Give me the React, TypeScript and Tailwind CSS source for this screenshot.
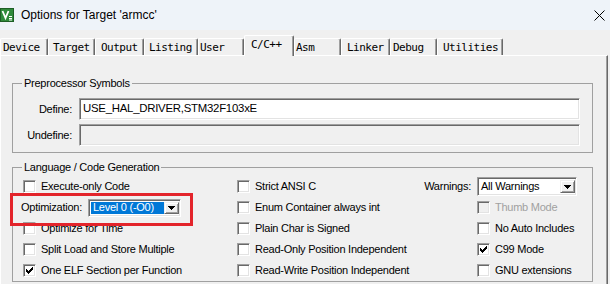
import React from "react";

const ui = "font-['Liberation_Sans',Arial,sans-serif] text-[11px] tracking-[-0.25px] text-black";

function Check({ checked, disabled }: { checked?: boolean; disabled?: boolean }) {
  return (
    <span
      className={`w-[13px] h-[13px] shrink-0 border border-t-[#a0a0a0] border-l-[#a0a0a0] border-r-white border-b-white shadow-[inset_1px_1px_0_#696969,inset_-1px_-1px_0_#e3e3e3] flex items-center justify-center ${
        disabled ? "bg-[#f0f0f0]" : "bg-white"
      }`}
    >
      {checked && (
        <svg width="7" height="7" viewBox="0 0 7 7" shapeRendering="crispEdges">
          <polygon points="0,2 2,4 7,-1 7,2 2,7 0,5" fill="#000" />
        </svg>
      )}
    </span>
  );
}

function CheckRow({ label, checked, disabled }: { label: string; checked?: boolean; disabled?: boolean }) {
  return (
    <div className="h-[21px] flex items-center gap-[5px]">
      <Check checked={checked} disabled={disabled} />
      <span className={disabled ? "text-[#a0a0a0]" : ""}>{label}</span>
    </div>
  );
}

function DropButton() {
  return (
    <div className="w-[15px] h-full bg-[#f0f0f0] border border-t-[#f0f0f0] border-l-[#f0f0f0] border-r-[#696969] border-b-[#696969] shadow-[inset_1px_1px_0_#ffffff,inset_-1px_-1px_0_#a0a0a0] flex items-center justify-center">
      <svg width="7" height="4" viewBox="0 0 7 4" shapeRendering="crispEdges">
        <polygon points="0,0 7,0 3.5,4" fill="#000" />
      </svg>
    </div>
  );
}

const tabs: { label: string; w: number; pl: number; sel?: boolean }[] = [
  { label: "Device", w: 48, pl: 2 },
  { label: "Target", w: 47, pl: 4 },
  { label: "Output", w: 49, pl: 5 },
  { label: "Listing", w: 54, pl: 4 },
  { label: "User", w: 46, pl: 1 },
  { label: "C/C++", w: 50, pl: 6, sel: true },
  { label: "Asm", w: 47, pl: 1 },
  { label: "Linker", w: 49, pl: 5 },
  { label: "Debug", w: 47, pl: 2 },
  { label: "Utilities", w: 66, pl: 5 },
];

export default function App() {
  return (
    <div className={`w-[610px] h-[284px] overflow-hidden bg-[#f0f0f0] ${ui}`}>
      {/* Title bar */}
      <div className="h-[30px] bg-[#eef3f9] flex items-center pr-[5px]">
        <svg width="14" height="14" viewBox="0 0 14 14" className="shrink-0">
          <rect x="0" y="0" width="14" height="14" fill="#2f8a3c" />
          <rect x="0.5" y="0.5" width="13" height="13" fill="none" stroke="#1d5e27" />
          <path d="M2.5 3 L5.5 10 L8.5 3" fill="none" stroke="#fff" strokeWidth="1.8" />
          <path d="M9 8.5 h3 M9 10.5 h3 M9 12 h3" stroke="#fff" strokeWidth="1" />
        </svg>
        <span className="ml-[7px] text-[12px] tracking-normal">Options for Target 'armcc'</span>
        <div className="flex-1" />
        <svg width="11" height="11" viewBox="0 0 11 11">
          <path d="M0.5 0.5 L10.5 10.5 M10.5 0.5 L0.5 10.5" stroke="#000" strokeWidth="1" />
        </svg>
      </div>

      {/* Tabs */}
      <div className="h-[25px] flex items-end font-['DejaVu_Sans_Mono',monospace] text-[11px] tracking-[-0.5px]">
        {tabs.map((t) =>
          t.sel ? (
            <div
              key={t.label}
              style={{ width: t.w, paddingLeft: t.pl }}
              className="relative z-10 h-[21px] -mb-[1px] bg-[#f0f0f0] border-t border-l border-white border-r border-r-[#696969] shadow-[inset_-1px_0_0_#a0a0a0] rounded-tl-[2px] rounded-tr-[2px] pt-[2px] leading-[13px]"
            >
              {t.label}
            </div>
          ) : (
            <div
              key={t.label}
              style={{ width: t.w, paddingLeft: t.pl }}
              className="h-[17px] border-t border-l border-white border-r border-r-[#696969] shadow-[inset_-1px_0_0_#a0a0a0] rounded-tl-[2px] rounded-tr-[2px] flex items-center leading-[13px]"
            >
              {t.label}
            </div>
          )
        )}
      </div>

      {/* Panel */}
      <div className="w-[608px] h-[240px] border-t border-l border-white border-r border-r-[#696969] shadow-[inset_-1px_0_0_#a0a0a0] pt-[20px] pl-[11px]">
        <fieldset className="w-[581px] border border-[#a0a0a0]">
          <legend className="ml-[9px] px-[2px] leading-[14px]">Preprocessor Symbols</legend>
          <div className="pt-[8px] pb-[6px] pr-[12px] flex flex-col gap-[4px]">
            <div className="flex items-center gap-[7px]">
              <span className="w-[59px] text-right">Define:</span>
              <div className="flex-1 h-[22px] bg-white border border-t-[#a0a0a0] border-l-[#a0a0a0] border-r-white border-b-white shadow-[inset_1px_1px_0_#696969,inset_-1px_-1px_0_#e3e3e3] flex items-center pl-[3px] text-[11.4px]">
                USE_HAL_DRIVER,STM32F103xE
              </div>
            </div>
            <div className="flex items-center gap-[7px]">
              <span className="w-[59px] text-right">Undefine:</span>
              <div className="flex-1 h-[22px] bg-[#f0f0f0] border border-t-[#a0a0a0] border-l-[#a0a0a0] border-r-white border-b-white shadow-[inset_1px_1px_0_#696969,inset_-1px_-1px_0_#e3e3e3]" />
            </div>
          </div>
        </fieldset>

        <fieldset className="mt-[7px] w-[581px] border border-[#a0a0a0]">
          <legend className="ml-[9px] px-[2px] leading-[14px]">Language / Code Generation</legend>
          <div className="pt-[2px] pl-[10px] grid grid-cols-[214px_173px_1fr]">
            <div className="flex flex-col">
              <CheckRow label="Execute-only Code" />
              <div className="relative h-[21px] -ml-[2px] flex items-center gap-[6px]">
                <span>Optimization:</span>
                <div className="w-[93px] h-[18px] bg-white border border-t-[#a0a0a0] border-l-[#a0a0a0] border-r-white border-b-white shadow-[inset_1px_1px_0_#696969,inset_-1px_-1px_0_#e3e3e3] p-[2px] pr-[1px] flex">
                  <div className="flex-1 bg-[#0078d7] text-white flex items-center pl-[2px]">Level 0 (-O0)</div>
                  <DropButton />
                </div>
                <div className="absolute left-[-11px] top-[-4px] w-[183px] h-[33px] border-[3px] border-[#e3242b]" />
              </div>
              <CheckRow label="Optimize for Time" />
              <CheckRow label="Split Load and Store Multiple" />
              <CheckRow label="One ELF Section per Function" checked />
            </div>
            <div className="flex flex-col">
              <CheckRow label="Strict ANSI C" />
              <CheckRow label="Enum Container always int" />
              <CheckRow label="Plain Char is Signed" />
              <CheckRow label="Read-Only Position Independent" />
              <CheckRow label="Read-Write Position Independent" />
            </div>
            <div className="flex flex-col">
              <div className="h-[21px] flex items-center">
                <span className="w-[67px] text-right pr-[6px]">Warnings:</span>
                <div className="w-[100px] h-[19px] bg-white border border-t-[#a0a0a0] border-l-[#a0a0a0] border-r-white border-b-white shadow-[inset_1px_1px_0_#696969,inset_-1px_-1px_0_#e3e3e3] p-[2px] pr-[1px] flex">
                  <div className="flex-1 flex items-center pl-[1px]">All Warnings</div>
                  <DropButton />
                </div>
              </div>
              <div className="pl-[67px] flex flex-col">
                <CheckRow label="Thumb Mode" disabled />
                <CheckRow label="No Auto Includes" />
                <CheckRow label="C99 Mode" checked />
                <CheckRow label="GNU extensions" />
              </div>
            </div>
          </div>
        </fieldset>
      </div>
    </div>
  );
}
